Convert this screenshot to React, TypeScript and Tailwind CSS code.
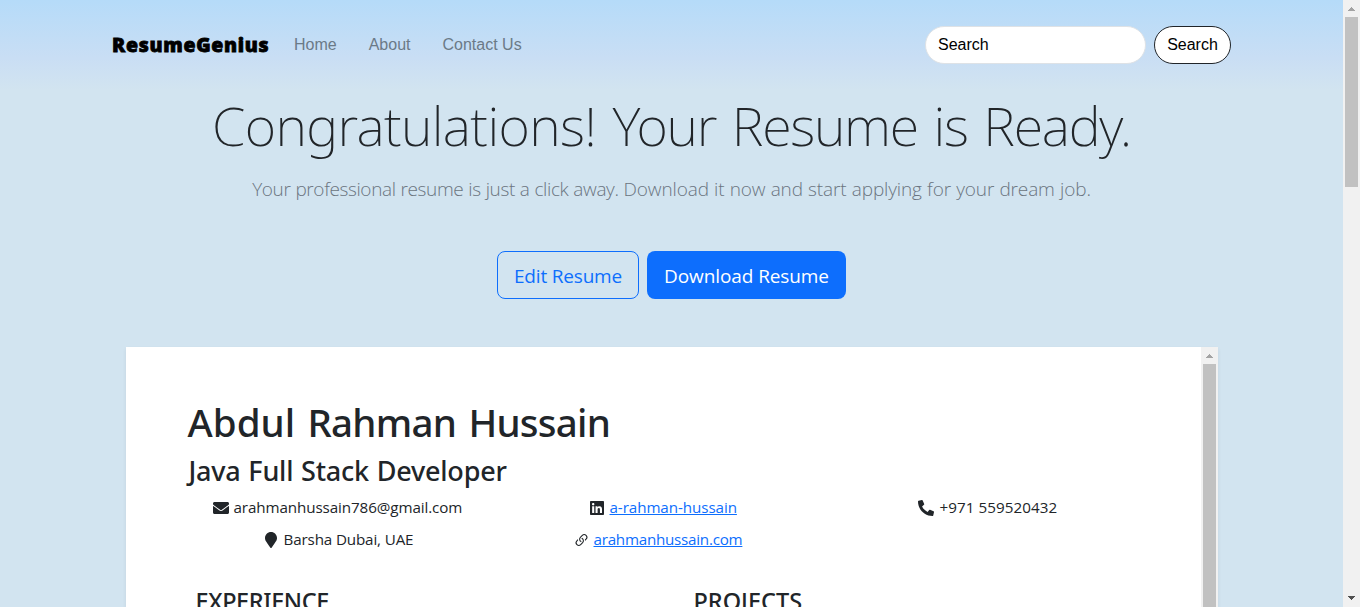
import type { ReactNode } from "react";
import { BsLink45Deg } from "react-icons/bs";
import { FaEnvelope, FaLinkedin, FaMapMarker, FaPhoneAlt } from "react-icons/fa";

function Arrow({ down = false, color }: { down?: boolean; color: string }) {
  return (
    <svg width="17" height="17" viewBox="0 0 17 17" shapeRendering="crispEdges" className="block shrink-0">
      <path
        fill={color}
        d={
          down
            ? "M5 6h7v1H5zM6 7h5v1H6zM7 8h3v1H7zM8 9h1v1H8z"
            : "M8 7h1v1H8zM7 8h3v1H7zM6 9h5v1H6zM5 10h7v1H5z"
        }
      />
    </svg>
  );
}

function NavBar() {
  return (
    <nav className="flex h-[90px] items-center bg-linear-to-b from-[#b5dbf9] via-[#c9def4] via-65% to-[#d2e4f0] pr-28 pl-28 font-['Liberation_Sans',sans-serif] text-base">
      <a className="w-[158px] font-['Open_Sans',sans-serif] text-[19.5px] leading-[30px] font-extrabold tracking-[0.7px] whitespace-nowrap text-black [-webkit-text-stroke:0.8px_black]">
        ResumeGenius
      </a>
      <ul className="ml-6 flex gap-8 text-[#6b7a87]">
        <li>Home</li>
        <li>About</li>
        <li>Contact Us</li>
      </ul>
      <form className="ml-auto flex gap-2">
        <input
          className="h-[38px] w-[221px] rounded-full border border-[#dee2e6] bg-white px-3 text-black outline-none placeholder:text-black"
          placeholder="Search"
        />
        <button type="button" className="h-[38px] w-[77px] rounded-full border border-[#212529] bg-white text-black">
          Search
        </button>
      </form>
    </nav>
  );
}

function Contact({ icon, children, className }: { icon: ReactNode; children: ReactNode; className: string }) {
  return (
    <div className={className}>
      <span className="flex w-5 shrink-0 items-center pt-0.5">{icon}</span>
      <span className="whitespace-nowrap">{children}</span>
    </div>
  );
}

function Resume() {
  return (
    <section className="mx-auto mt-12 flex h-[260px] w-[1092px] bg-white shadow-[0_2px_4px_rgba(0,0,0,0.075)]">
      <div className="h-[260px] flex-1 overflow-hidden pt-12 pl-[62px]">
        <h1 className="mt-1 h-12 font-['Noto_Sans',sans-serif] text-[38.5px] leading-[47px] font-medium tracking-[-0.75px] [word-spacing:3px]">
          <span className="tracking-[0.05px]">Abdul</span> Rahman Hussain
        </h1>
        <h2 className="mt-2 h-[34px] pl-px font-['Noto_Sans',sans-serif] text-[27px] leading-[32px] font-medium tracking-[-0.22px] [word-spacing:1px]">
          Java Full Stack Developer
        </h2>
        <div className="mt-1.5 grid grid-cols-[362px_344px_1fr] gap-y-2 pl-[25px] text-[15.2px] leading-6">
          <Contact className="flex w-fit gap-px tracking-[-0.1px]" icon={<FaEnvelope size={16} />}>
            arahmanhussain786@gmail.com
          </Contact>
          <Contact className="ml-[15px] flex w-fit tracking-[-0.08px]" icon={<FaLinkedin size={16} className="-ml-px" />}>
            <a className="text-[#0d6efd] underline">a-rahman-hussain</a>
          </Contact>
          <Contact className="-ml-px flex w-fit gap-0.5 tracking-[0.07px]" icon={<FaPhoneAlt size={16} />}>
            +971 559520432
          </Contact>
          <Contact className="ml-[50px] flex w-fit gap-px tracking-[-0.14px]" icon={<FaMapMarker size={16} />}>
            Barsha Dubai, UAE
          </Contact>
          <Contact
            className="-ml-px flex w-fit tracking-[-0.25px]"
            icon={<BsLink45Deg size={17} className="-ml-px shrink-0" />}
          >
            <a className="text-[#0d6efd] underline">arahmanhussain.com</a>
          </Contact>
        </div>
        <div className="mt-9 grid grid-cols-[498px_1fr] pl-2 font-['Noto_Sans',sans-serif] text-[23.5px] leading-[29px] font-medium">
          <h3 className="tracking-[-0.4px]">EXPERIENCE</h3>
          <h3>PROJECTS</h3>
        </div>
      </div>
      <div className="flex h-[260px] w-[17px] flex-col items-center bg-[#f1f1f1]">
        <Arrow color="#a3a3a3" />
        <div className="w-[13px] flex-1 bg-[#c1c1c1]" />
      </div>
    </section>
  );
}

export default function App() {
  return (
    <div className="flex h-[607px] w-[1360px] overflow-hidden bg-[#d2e4f0] font-['Open_Sans',sans-serif] text-[#212529]">
      <main className="h-[607px] w-[1343px] overflow-hidden">
        <NavBar />
        <header className="text-center">
          <h1 className="mt-0.5 h-[68px] font-['Noto_Sans',sans-serif] text-[54px] leading-[67px] font-[250] tracking-[-1.3px] whitespace-nowrap [word-spacing:3px]">
            <span className="tracking-[-0.65px]">Congratulations! </span>Your Resume is Ready.
          </h1>
          <p className="mt-[14px] h-[30px] text-[19px] leading-[30px] font-light tracking-[-0.12px] text-[#6b7580] [word-spacing:0.4px]">
            <span className="tracking-[-0.38px]">Your professional resume is just a click away. </span>
            Download it now and start applying for your dream job.
          </p>
          <div className="mt-[47px] flex justify-center gap-2 text-[19px]">
            <button className="h-12 w-[142px] rounded-lg border border-[#0d6efd] pt-0.5 tracking-[-0.18px] text-[#0d6efd]">
              Edit Resume
            </button>
            <button className="h-12 w-[199px] rounded-lg bg-[#0d6efd] pt-0.5 tracking-[-0.1px] text-white">
              Download Resume
            </button>
          </div>
        </header>
        <Resume />
      </main>
      <div className="flex h-[607px] w-[17px] flex-col items-center bg-[#f1f1f1]">
        <Arrow color="#a3a3a3" />
        <div className="h-[170px] w-[13px] bg-[#c1c1c1]" />
        <div className="flex-1" />
        <Arrow down color="#505050" />
      </div>
    </div>
  );
}
